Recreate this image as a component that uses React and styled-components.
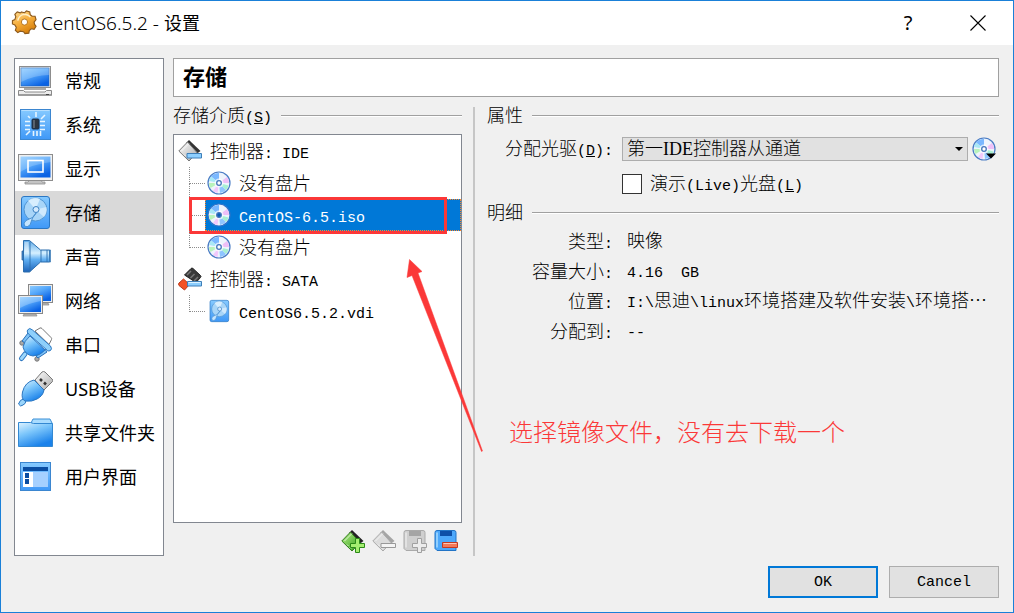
import React from "react";
import styled, { createGlobalStyle } from "styled-components";

const GlobalStyle = createGlobalStyle`
  *, *::before, *::after { box-sizing: border-box; }
  body { margin: 0; background: #f0f0f0; }
`;

const SONG = `"Liberation Mono", "Noto Sans CJK SC", monospace`;
const YAHEI = `"Noto Sans", "Noto Sans CJK SC", sans-serif`;

const Window = styled.div`
  min-height: 100vh;
  display: flex;
  flex-direction: column;
  border: 1px solid #1a80d8;
  background: #f0f0f0;
  color: #000;
  font-family: ${SONG};
  font-size: 18px;
  font-weight: 300;
  line-height: 24px;
`;

const TitleBar = styled.header`
  display: flex;
  align-items: center;
  height: 44px;
  padding-left: 10px;
  gap: 4px;
  background: #fff;
  font-family: ${YAHEI};
`;

const WindowTitle = styled.h1`
  flex: 1;
  margin: 0;
  font-size: 18px;
  font-weight: 400;
`;

const MachineName = styled.span`
  font-size: 19px;
  font-weight: 300;
`;

const WindowButtons = styled.div`
  display: flex;
`;

const TitleButton = styled.button`
  display: flex;
  align-items: center;
  justify-content: center;
  width: 70px;
  height: 44px;
  padding: 0;
  border: 0;
  background: none;
  color: #000;
  font: 400 20px/44px ${YAHEI};
`;

const Body = styled.div`
  flex: 1;
  display: flex;
  flex-direction: column;
  gap: 10px;
  padding: 13px 14px 14px 13px;
`;

const Content = styled.div`
  flex: 1;
  display: flex;
  gap: 9px;
`;

const Sidebar = styled.nav`
  flex: 0 0 150px;
  border: 1px solid #828790;
  background: #fff;
  font-family: ${YAHEI};
  font-weight: 400;
`;

const SidebarLink = styled.a`
  display: flex;
  align-items: center;
  gap: 12px;
  height: 44px;
  padding-left: 2px;
  color: #000;
  text-decoration: none;
  white-space: nowrap;
  background: ${(p) => (p.$active ? "#d9d9d9" : "transparent")};
`;

const Main = styled.main`
  flex: 1;
  min-width: 0;
  display: flex;
  flex-direction: column;
  gap: 10px;
`;

const PageHeading = styled.h2`
  margin: 0;
  padding: 4px 9px 0;
  border: 1px solid #a0a0a0;
  background: #fff;
  font-size: 22px;
  font-weight: 700;
  line-height: 33px;
`;

const Columns = styled.div`
  flex: 1;
  display: flex;
`;

const StorageColumn = styled.section`
  flex: 0 0 289px;
  display: flex;
  flex-direction: column;
`;

const Divider = styled.div`
  flex: 0 0 2px;
  margin: 0 12px 0 11px;
  background: #c6c6c6;
`;

const AttributeColumn = styled.section`
  flex: 1;
  min-width: 0;
`;

const GroupTitle = styled.h3`
  display: flex;
  align-items: center;
  gap: 9px;
  height: 18px;
  margin: 0;
  padding-top: 2px;
  font-size: 18px;
  font-weight: 300;
  line-height: 18px;
  white-space: nowrap;

  &::after {
    content: "";
    flex: 1;
    height: 2px;
    margin-bottom: 2px;
    border-top: 1px solid #a0a0a0;
    background: #fff;
  }
`;

const Latin = styled.span`
  font-size: 15px;
  font-weight: 400;
  line-height: 0;
  white-space: pre;
`;

const TreeBox = styled.div`
  position: relative;
  flex: 1;
  margin-top: 9px;
  border: 1px solid #828790;
  background: #fff;
`;

const Tree = styled.ul`
  margin: 0;
  padding: 0;
  list-style: none;
`;

const TreeRow = styled.li`
  position: relative;
  display: flex;
  height: 32px;
  padding-left: ${(p) => (p.$child ? "15px" : "1px")};
`;

const Branch = styled.span`
  display: flex;
  flex-direction: column;
  width: 16px;

  &::before {
    content: "";
    height: 17px;
    border-left: 1px dotted #8c8c8c;
    border-bottom: 1px dotted #8c8c8c;
  }
  &::after {
    content: "";
    flex: 1;
    border-left: ${(p) => (p.$last ? "0" : "1px dotted #8c8c8c")};
  }
`;

const TreeLabel = styled.span`
  flex: 1;
  display: flex;
  align-items: center;
  gap: 8px;
  padding-left: ${(p) => (p.$child ? "2px" : "3px")};
  background: ${(p) => (p.$selected ? "#0078d7" : "transparent")};
  color: ${(p) => (p.$selected ? "#fff" : "#000")};
  outline: ${(p) => (p.$selected ? "1px dotted #ff8728" : "0")};
  outline-offset: -1px;
`;

const TreeText = styled.span`
  padding-top: 3px;
`;

const RedFrame = styled.span`
  position: absolute;
  inset: -2px 14px -3px 15px;
  border: 3px solid #fb3838;
  pointer-events: none;
`;

const Arrow = styled.svg`
  position: absolute;
  left: 231px;
  top: 123px;
  pointer-events: none;
`;

const Toolbar = styled.div`
  display: flex;
  justify-content: flex-end;
  gap: 7px;
  padding: 6px 4px 3px;
`;

const IconButton = styled.button`
  display: flex;
  width: 24px;
  height: 24px;
  padding: 0;
  border: 0;
  background: none;
`;

const Field = styled.div`
  display: grid;
  grid-template-columns: 126px 1fr;
  grid-template-rows: 24px;
  column-gap: 9px;
  align-items: center;
  margin-top: ${(p) => (p.$first ? "12px" : "11px")};
`;

const FieldLabel = styled.label`
  padding-top: 2px;
  text-align: right;
  white-space: nowrap;
`;

const FieldControl = styled.div`
  display: flex;
  align-items: center;
  gap: ${(p) => (p.$wide ? "8px" : "4px")};
  min-width: 0;
  padding-right: 3px;
`;

const SelectWrap = styled.span`
  flex: 1;
  min-width: 0;
  display: grid;
  align-items: center;

  > * { grid-area: 1 / 1; }
  > svg { justify-self: end; margin-right: 5px; pointer-events: none; }
`;

const Select = styled.select`
  appearance: none;
  width: 100%;
  height: 24px;
  padding: 0 20px 0 4px;
  border: 1px solid #adadad;
  border-radius: 0;
  background: #e1e1e1;
  color: #000;
  font: 300 18px/22px "Liberation Serif", "Noto Sans CJK SC", serif;
`;

const Checkbox = styled.input`
  appearance: none;
  flex: 0 0 20px;
  height: 20px;
  margin: 0;
  border: 1px solid #333;
  background: #fff;
`;

const DetailTitle = styled(GroupTitle)`
  margin-top: 8px;
`;

const Details = styled.dl`
  display: grid;
  grid-template-columns: 126px 1fr;
  grid-auto-rows: 30px;
  column-gap: 14px;
  align-items: center;
  margin: 5px 0 0;
  white-space: nowrap;

  dt { padding-top: 2px; text-align: right; }
  dd { margin: 0; min-width: 0; overflow: hidden; }
`;

const Note = styled.p`
  margin: 72px 0 0 22px;
  color: #fb3838;
  font-size: 24px;
  line-height: 32px;
  white-space: nowrap;
`;

const Footer = styled.footer`
  display: flex;
  justify-content: flex-end;
  gap: 11px;
`;

const DialogButton = styled.button`
  width: 110px;
  height: 32px;
  padding: 2px 0 0;
  border: ${(p) => (p.$primary ? "2px solid #0078d7" : "1px solid #adadad")};
  background: #e1e1e1;
  color: #000;
  font: 400 15px/20px ${SONG};
`;

/* Latin runs are set smaller so that two letters fill one ideograph. */
function Mixed({ children }) {
  return children
    .split(/([\x20-\x7e]+)/)
    .filter(Boolean)
    .map((run, i) =>
      /^[\x20-\x7e]/.test(run) ? <Latin key={i}>{run}</Latin> : <React.Fragment key={i}>{run}</React.Fragment>
    );
}

const Key = ({ k }) => (
  <Latin>
    (<u>{k}</u>)
  </Latin>
);

const GradientDefs = styled.svg`
  position: absolute;
`;

function Gradients() {
  return (
    <GradientDefs width="0" height="0" aria-hidden="true">
      <defs>
        <linearGradient id="screen" x1="0" y1="0" x2="0.6" y2="1">
          <stop offset="0" stopColor="#8ccbff" />
          <stop offset="0.45" stopColor="#55a8fb" />
          <stop offset="1" stopColor="#0a62e4" />
        </linearGradient>
        <linearGradient id="sky" x1="0" y1="0" x2="0.5" y2="1">
          <stop offset="0" stopColor="#dff3ff" />
          <stop offset="0.45" stopColor="#7cc6fb" />
          <stop offset="1" stopColor="#1b82ea" />
        </linearGradient>
        <linearGradient id="flat" x1="0" y1="0" x2="0" y2="1">
          <stop offset="0" stopColor="#86caff" />
          <stop offset="1" stopColor="#3f98f7" />
        </linearGradient>
        <linearGradient id="horn" x1="0" y1="0" x2="0" y2="1">
          <stop offset="0" stopColor="#5ea9e8" />
          <stop offset="0.4" stopColor="#d5f0ff" />
          <stop offset="0.6" stopColor="#63b1f3" />
          <stop offset="1" stopColor="#1d63b8" />
        </linearGradient>
        <linearGradient id="metal" x1="0" y1="0" x2="1" y2="1">
          <stop offset="0" stopColor="#fff" />
          <stop offset="1" stopColor="#aaa" />
        </linearGradient>
        <linearGradient id="gold" x1="0" y1="0" x2="0.5" y2="1">
          <stop offset="0" stopColor="#ffdf9a" />
          <stop offset="0.55" stopColor="#f6ae3c" />
          <stop offset="1" stopColor="#d9820e" />
        </linearGradient>
        <linearGradient id="green" x1="0" y1="0" x2="1" y2="1">
          <stop offset="0" stopColor="#b9f08c" />
          <stop offset="1" stopColor="#2a9a12" />
        </linearGradient>
      </defs>
    </GradientDefs>
  );
}

const Svg36 = ({ children }) => (
  <svg width="36" height="36" viewBox="0 0 36 36" aria-hidden="true">{children}</svg>
);
const Svg24 = ({ children }) => (
  <svg width="24" height="24" viewBox="0 0 24 24" aria-hidden="true">{children}</svg>
);

const GeneralIcon = () => (
  <Svg36>
    <rect x="2.5" y="3.5" width="31" height="21" fill="#e6e6e6" stroke="#8d8d8d" />
    <rect x="4" y="5" width="28" height="18" fill="url(#screen)" stroke="#2467b8" strokeWidth="0.6" />
    <path d="M4 5h28v7Q18 12 4 19z" fill="#fff" opacity="0.22" />
    <rect x="7" y="25" width="22" height="2" fill="#aaa" />
    <path d="M1.500 27.500h5l1.500 1.500h20l1.500-1.500h5v5h-33z" fill="#ececec" stroke="#8a8a8a" />
    <path d="M2 31h32v2H2z" fill="#9d9d9d" />
    <path d="M29 31.500h3" stroke="#444" />
  </Svg36>
);

const SystemIcon = () => (
  <Svg36>
    <rect x="3.500" y="2.500" width="30" height="30" fill="url(#flat)" stroke="#3b86d0" />
    <path d="M4.500 3.500h28" stroke="#b5deff" />
    <path d="M19 5v5M28 8l-4 4M11 9l2 2M8 14.500h5M8 18.500h5M8 22.500h5M23 14.500h5M23 18.500h5M23 22.500h5M9 28l4-4M16.500 24v5M20 24v5M23.500 24v5" stroke="#e7f5ff" strokeWidth="1.600" />
    <rect x="15" y="12" width="7" height="10" rx="1" fill="#2d3540" stroke="#17304f" />
    <path d="M16 13h2v8h-2z" fill="#59636f" />
  </Svg36>
);

const DisplayIcon = () => (
  <Svg36>
    <path d="M13 29h11l1 2h3v2H8v-2h3z" fill="#c4c4c4" stroke="#8e8e8e" strokeWidth="0.8" />
    <rect x="1.500" y="3.500" width="34" height="26" fill="#f0f0f0" stroke="#8d8d8d" />
    <rect x="3.500" y="5.500" width="30" height="21" fill="url(#screen)" />
    <path d="M3 5h31v6Q16 13 3 21z" fill="#fff" opacity="0.2" />
    <rect x="11" y="9.500" width="15" height="11.500" fill="none" stroke="#fff" strokeWidth="1.600" />
  </Svg36>
);

const DiskShape = () => (
  <>
    <rect x="4.500" y="1.500" width="28" height="32" rx="2.500" fill="url(#flat)" stroke="#2b77c3" />
    <circle cx="18.500" cy="14.500" r="11.500" fill="#a8d5f8" stroke="#4e94d3" />
    <path d="M18.500 14.500 11 5.500A11.500 11.500 0 0 1 23 4z" fill="#e3f4ff" opacity="0.8" />
    <path d="M18.500 14.500 29.500 12A11.500 11.500 0 0 1 27 22z" fill="#dff1ff" opacity="0.7" />
    <circle cx="19" cy="14.500" r="3" fill="#d3eaff" stroke="#3d82c2" />
    <path d="M19.500 17.500 15.500 23 13 30q-3 3-5.500 1-1.500-3 1.500-5.500l6.500-3z" fill="#c5e5ff" stroke="#4a90d0" />
  </>
);

const StorageIcon = () => <Svg36><DiskShape /></Svg36>;

const SoundIcon = () => (
  <Svg36>
    <path d="M6.500 12H5v9h2z" fill="#3a86cc" stroke="#28619f" strokeWidth="0.8" />
    <path d="M6.500 1.500h6l11 9.500h9v12h-9L12.500 33h-6z" fill="url(#horn)" stroke="#2d6fae" />
    <path d="M13 2.500v30M24 11v12M30 11v12" stroke="#2d6fae" strokeWidth="0.9" />
    <path d="M7.500 3h4v10h-4z" fill="#fff" opacity="0.4" />
    <path d="M32.500 11h1v12h-1z" fill="#8bc3ee" stroke="#2d6fae" strokeWidth="0.7" />
  </Svg36>
);

const NetworkIcon = () => (
  <Svg36>
    <rect x="11.500" y="1.500" width="24" height="18" fill="#eee" stroke="#888" />
    <rect x="13" y="3" width="21" height="15" fill="url(#screen)" />
    <path d="M20 20h11l1 2H20z" fill="#bbb" stroke="#888" strokeWidth="0.700" />
    <path d="M7 31h12l1 2H6z" fill="#bbb" stroke="#888" strokeWidth="0.700" />
    <rect x="1.500" y="12.500" width="24" height="18" fill="#eee" stroke="#888" />
    <rect x="3" y="14" width="21" height="15" fill="url(#screen)" />
    <path d="M3 14h21v4Q12 20 3 25z" fill="#fff" opacity="0.25" />
  </Svg36>
);

const SerialIcon = () => (
  <Svg36>
    <path d="m18 4 5-3q1-.5 2 .5l9 9q1 1 .5 2l-2.500 5z" fill="#fff" stroke="#777" />
    <path d="M8 27 4.500 31.500" stroke="#2d77c1" strokeWidth="5" strokeLinecap="round" />
    <path d="M8 27 4.500 31.500" stroke="#9bd6fc" strokeWidth="3" strokeLinecap="round" />
    <circle cx="5" cy="16" r="2.200" fill="#aaa" stroke="#777" />
    <circle cx="20" cy="32" r="2.200" fill="#aaa" stroke="#777" />
    <path d="m5 14 6-8 3 2-6 8zM19 29l9-7 2 3-9 6z" fill="#7cc1f5" stroke="#286fb9" />
    <path d="M13 9 28 23q-5 6-12 6-8-1-10-9 1-6 7-11z" fill="url(#sky)" stroke="#2d77c1" />
    <path d="M10.500 3q2-3 5 0l18 16q2 3 0 4.500-2 1-3 0L11.500 7q-2-2-1-4z" fill="#8ed0fb" stroke="#2d77c1" />
  </Svg36>
);

const UsbIcon = () => (
  <Svg36>
    <path d="m18 9 7-8q1.500-1 3 0l7 7q1.500 1 .5 2.500l-9 9z" fill="url(#metal)" stroke="#777" />
    <path d="m23 8 2 2M27 11.500l2 2" stroke="#333" strokeWidth="2.500" />
    <path d="M7.500 27.500q-5 1-6 5.500 2 3.500 4.500 1 3-1 3-5z" fill="#9ad5fb" stroke="#2b76c0" />
    <path d="m17 9 10 10q-1 6-7 9-5 3-12 2Q4 28 5.500 21 8 11 17 9z" fill="url(#sky)" stroke="#2b76c0" />
  </Svg36>
);

const FolderIcon = () => (
  <Svg36>
    <path d="m14 8 2-4h17l2 4v4H12z" fill="#a9dcff" stroke="#3b8fd6" />
    <path d="M1.500 7.500h12l3 1h19v23h-34z" fill="url(#sky)" stroke="#3388d2" />
  </Svg36>
);

const InterfaceIcon = () => (
  <Svg36>
    <rect x="3.500" y="3.500" width="30" height="28" fill="url(#flat)" stroke="#3b86d0" />
    <path d="M6 8h25v4H6z" fill="#0a4da2" />
    <path d="M6 13h10v15H6z" fill="#fff" />
    <path d="M16 13h15v15H16z" fill="#a5d0ff" />
    <path d="M8 14h4v5H8zM8 20h4v5H8z" fill="#0a4da2" />
  </Svg36>
);

const GearIcon = () => (
  <svg width="26" height="26" viewBox="-1 0 27 27" aria-hidden="true">
    <path d="m10 2 3 1 2-2 3.500 1 .5 3 2 1.500h3l1 3.500-2 2.500.5 2.500 1.500 2-2 3-3-.5-2 2-.5 2.500-4 .5-1.500-2-3.500-.5-2.500 1.500-2.500-2.500 1-3-1.500-2.500-2.500-1v-3.500l2.500-1 1-3-1-2.500 2.500-2.500 3 1z" fill="url(#gold)" stroke="#8d5a1d" strokeWidth="1.200" />
    <path d="M6 11q1-5 6-6.500 5 0 7 3" fill="none" stroke="#fff0c9" strokeWidth="1.500" />
    <circle cx="13" cy="12.500" r="3.200" fill="#fff" stroke="#b5741c" strokeWidth="1" />
  </svg>
);

const DiscIcon = ({ menu, selected }) => (
  <Svg24>
    <circle cx="12" cy="12" r="11" fill="#eef4fc" stroke={selected ? "#2f73c9" : "#4a7cc4"} strokeWidth="1.200" />
    <path d="M12 12 4 5.500A10 10 0 0 1 12 2z" fill="#7ab8ff" />
    <path d="M12 12 2.200 10A10 10 0 0 1 4 5.500z" fill="#a9e8f5" />
    <path d="M12 12 2 12a10 10 0 0 0 1.500 5z" fill="#b8f3bb" />
    <path d="M12 12 6 20a10 10 0 0 0 4.500 1.900z" fill="#f1c8fb" />
    <path d="M12 12 13 22a10 10 0 0 0 6-3z" fill="#8ec5ff" />
    <path d="M12 12 19 19a10 10 0 0 0 2.500-4.500z" fill="#a7f0d2" />
    <path d="M12 12 22 12a10 10 0 0 0-2-6z" fill="#eebff7" />
    <circle cx="12" cy="12" r="4.500" fill="#fff" opacity="0.7" />
    <circle cx="12" cy="12" r="2.300" fill={selected ? "#0b5db5" : "#fff"} stroke="#4476bb" strokeWidth="1.300" />
    {menu && <path d="M14 16.500h10l-5 5z" fill="#000" />}
  </Svg24>
);

const SmallDiskIcon = () => (
  <svg width="24" height="24" viewBox="0 0 36 35" aria-hidden="true"><DiskShape /></svg>
);

const tones = {
  ide: { card: "url(#metal)", edge: "#333", line: "#777" },
  green: { card: "url(#green)", edge: "#222", line: "#317a1d" },
  grey: { card: "#dcdcdc", edge: "#a5a5a5", line: "#aaa" },
};

const CardIcon = ({ tone, sign }) => {
  const t = tones[tone];
  return (
    <Svg24>
      <path d="m11 1 11.500 11-4 3L8 4z" fill={t.edge} />
      <path d="M9.500 3 19 13.500 11 22 .8 12z" fill={t.card} stroke={t.line} />
      <path d="m3.500 12 7.500-7.500M6 15.500l1.500 1.500M8.500 18l1.500 1.500" stroke="#fff" opacity="0.7" />
      {sign === "bar" && <path d="M9 14.500h14.500v4.500H9z" fill="#8dcfff" stroke="#3e7fb8" />}
      {sign === "minus" && <path d="M9 14.500h14.500v4H9z" fill="#f4f4f4" stroke="#999" />}
      {sign === "plus" && <path d="M14.500 9.500h4v5h5v4h-5v5h-4v-5h-5v-4h5z" fill="#a5ee71" stroke="#2b8a18" />}
    </Svg24>
  );
};

const SataIcon = () => (
  <Svg24>
    <path d="M13 1.500q1-1 2 0l7.500 7q1 1 0 2L18 15.500 6.500 8z" fill="#3a3a3a" stroke="#222" />
    <path d="m9 8 4-4M12.500 11l4-4M16 14l4-4" stroke="#777" strokeWidth="1.500" />
    <path d="m5.500 12 6 5.500L6.500 23 1 18.500q-1-1.500 0-2.500z" fill="#f45224" stroke="#b8391c" />
    <path d="M9.500 14.500h14v4.500h-14z" fill="#8dcfff" stroke="#3e7fb8" />
    <path d="M10.500 15.500h12" stroke="#dcf2ff" />
  </Svg24>
);

const FloppyIcon = ({ grey }) => (
  <Svg24>
    <path d="M3 1.500h17q2 0 2 2v18H3l-2-2v-16q0-2 2-2z" fill={grey ? "#cfcfcf" : "#4da8fb"} stroke={grey ? "#aaa" : "#2274c6"} />
    <path d="M6 2h12v5H6z" fill={grey ? "#a5a5a5" : "#0d4fa8"} />
    <path d="M3 3.500v15" stroke={grey ? "#e8e8e8" : "#a8dcff"} strokeWidth="1.500" />
    {grey ? (
      <path d="M14.500 9.500h4v5h5v4h-5v5h-4v-5h-5v-4h5z" fill="#ececec" stroke="#a0a0a0" />
    ) : (
      <>
        <path d="M8.500 13.500h15v5h-15z" fill="#f4795a" stroke="#c33a22" />
        <path d="M9.500 14.500h13" stroke="#ffc6b4" />
      </>
    )}
  </Svg24>
);

const sections = [
  ["常规", GeneralIcon],
  ["系统", SystemIcon],
  ["显示", DisplayIcon],
  ["存储", StorageIcon],
  ["声音", SoundIcon],
  ["网络", NetworkIcon],
  ["串口", SerialIcon],
  ["USB设备", UsbIcon],
  ["共享文件夹", FolderIcon],
  ["用户界面", InterfaceIcon],
];

const media = [
  { text: "控制器: IDE", icon: <CardIcon tone="ide" sign="bar" /> },
  { text: "没有盘片", icon: <DiscIcon />, child: true },
  { text: "CentOS-6.5.iso", icon: <DiscIcon selected />, child: true, selected: true },
  { text: "没有盘片", icon: <DiscIcon />, child: true, last: true },
  { text: "控制器: SATA", icon: <SataIcon /> },
  { text: "CentOS6.5.2.vdi", icon: <SmallDiskIcon />, child: true, last: true },
];

const details = [
  ["类型:", "映像"],
  ["容量大小:", "4.16  GB"],
  ["位置:", "I:\\思迪\\linux环境搭建及软件安装\\环境搭⋯"],
  ["分配到:", "--"],
];

export default function App() {
  return (
    <Window>
      <GlobalStyle />
      <Gradients />
      <TitleBar>
        <GearIcon />
        <WindowTitle><MachineName>CentOS6.5.2 - </MachineName>设置</WindowTitle>
        <WindowButtons>
          <TitleButton type="button">?</TitleButton>
          <TitleButton type="button" aria-label="关闭">
            <svg width="16" height="16" viewBox="0 0 16 16" aria-hidden="true">
              <path d="m.5.500 15 15m0-15-15 15" stroke="#000" strokeWidth="1.100" />
            </svg>
          </TitleButton>
        </WindowButtons>
      </TitleBar>
      <Body>
        <Content>
          <Sidebar>
            {sections.map(([name, Icon]) => (
              <SidebarLink key={name} href="#" $active={name === "存储"}>
                <Icon />
                {name}
              </SidebarLink>
            ))}
          </Sidebar>
          <Main>
            <PageHeading>存储</PageHeading>
            <Columns>
              <StorageColumn>
                <GroupTitle>
                  <span>存储介质<Key k="S" /></span>
                </GroupTitle>
                <TreeBox>
                  <Tree>
                    {media.map((m, i) => (
                      <TreeRow key={i} $child={m.child}>
                        {m.child && <Branch $last={m.last} />}
                        <TreeLabel $child={m.child} $selected={m.selected}>
                          {m.icon}
                          <TreeText><Mixed>{m.text}</Mixed></TreeText>
                        </TreeLabel>
                        {m.selected && <RedFrame />}
                      </TreeRow>
                    ))}
                  </Tree>
                  <Arrow width="80" height="196" viewBox="0 0 80 196" aria-hidden="true">
                    <path d="M4.500 1.500 17 13.500l-4 1.500L77.500 193l-1 .5L7 17.500l-5 2z" fill="#fb3838" stroke="#fb3838" strokeWidth="0.500" />
                  </Arrow>
                </TreeBox>
                <Toolbar>
                  <IconButton type="button" aria-label="添加控制器"><CardIcon tone="green" sign="plus" /></IconButton>
                  <IconButton type="button" aria-label="删除控制器"><CardIcon tone="grey" sign="minus" /></IconButton>
                  <IconButton type="button" aria-label="添加附件"><FloppyIcon grey /></IconButton>
                  <IconButton type="button" aria-label="删除附件"><FloppyIcon /></IconButton>
                </Toolbar>
              </StorageColumn>
              <Divider />
              <AttributeColumn>
                <GroupTitle>属性</GroupTitle>
                <Field $first>
                  <FieldLabel htmlFor="drive">分配光驱<Key k="D" /><Latin>:</Latin></FieldLabel>
                  <FieldControl>
                    <SelectWrap>
                      <Select id="drive">
                        <option>第一IDE控制器从通道</option>
                      </Select>
                      <svg width="8" height="4" viewBox="0 0 8 4" aria-hidden="true">
                        <path d="M0 0h8L4 4z" />
                      </svg>
                    </SelectWrap>
                    <IconButton type="button" aria-label="选择光盘"><DiscIcon menu /></IconButton>
                  </FieldControl>
                </Field>
                <Field>
                  <span />
                  <FieldControl $wide>
                    <Checkbox type="checkbox" id="live" />
                    <FieldLabel htmlFor="live">演示<Latin>(Live)</Latin>光盘<Key k="L" /></FieldLabel>
                  </FieldControl>
                </Field>
                <DetailTitle>明细</DetailTitle>
                <Details>
                  {details.map(([name, value]) => (
                    <React.Fragment key={name}>
                      <dt><Mixed>{name}</Mixed></dt>
                      <dd><Mixed>{value}</Mixed></dd>
                    </React.Fragment>
                  ))}
                </Details>
                <Note>选择镜像文件，没有去下载一个</Note>
              </AttributeColumn>
            </Columns>
          </Main>
        </Content>
        <Footer>
          <DialogButton type="button" $primary>OK</DialogButton>
          <DialogButton type="button">Cancel</DialogButton>
        </Footer>
      </Body>
    </Window>
  );
}
